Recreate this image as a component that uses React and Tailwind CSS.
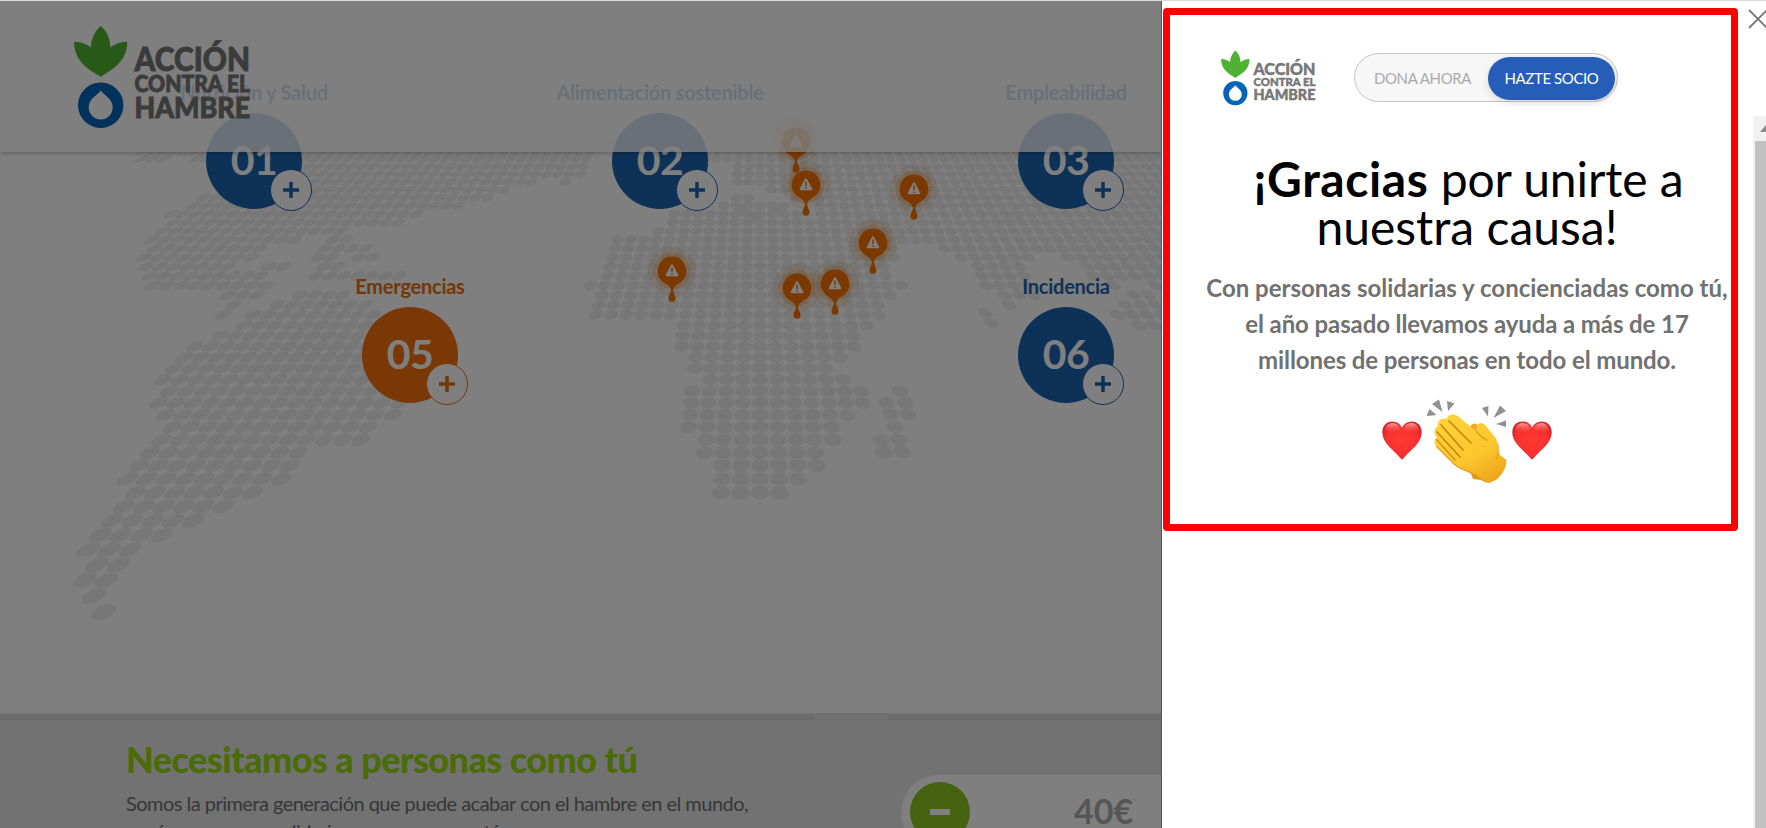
import React from "react";

const NORTH_AMERICA = [[141,150],[250,120],[330,112],[600,105],[600,150],[592,165],[565,187],[548,178],[533,182],[477,202],[418,215],[400,228],[325,232],[275,246],[240,264],[232,272],[285,262],[280,272],[252,279],[277,288],[252,298],[236,318],[217,318],[228,292],[170,294],[145,284],[150,272],[134,266],[145,240],[165,218],[187,202],[215,194],[215,168],[190,158],[141,160]];
const CARIBBEAN = [[325,238],[356,240],[374,250],[372,262],[352,262],[340,254],[345,268],[400,272],[404,280],[340,281],[300,281],[315,266],[308,258],[325,250]];
const SOUTH_AMERICA = [[310,290],[345,290],[376,303],[370,330],[400,380],[405,410],[378,423],[369,436],[361,447],[297,455],[290,470],[277,485],[246,495],[236,510],[203,524],[170,540],[136,553],[124,568],[112,585],[101,598],[112,614],[84,618],[78,604],[80,590],[84,583],[80,568],[88,553],[79,537],[92,522],[105,508],[117,497],[114,483],[126,470],[139,457],[152,445],[165,433],[176,423],[152,411],[148,400],[160,390],[156,378],[170,366],[183,354],[197,344],[224,334],[238,324],[250,313],[280,304]];
const AFRICA_EURASIA = [[700,152],[760,132],[770,112],[860,104],[1000,100],[1200,105],[1200,300],[1160,290],[1125,280],[1090,277],[1075,262],[1055,252],[1035,254],[1030,270],[1038,302],[1010,306],[985,290],[965,262],[945,252],[925,240],[900,240],[893,262],[902,285],[890,300],[882,316],[870,332],[852,350],[840,362],[842,373],[858,381],[876,393],[864,405],[850,418],[836,430],[838,443],[822,456],[824,468],[806,482],[790,498],[710,498],[710,465],[694,455],[696,440],[680,430],[685,395],[702,383],[690,372],[690,358],[678,348],[668,338],[684,330],[674,318],[648,314],[642,323],[594,323],[586,308],[588,290],[597,271],[605,250],[612,236],[655,236],[662,222],[680,210],[722,207],[736,196],[752,190],[752,204],[770,205],[790,205],[800,212],[808,217],[760,218],[722,222],[760,222],[810,222],[812,202],[750,186],[725,178],[740,163],[700,168]];
const OCEANIA = [[1105,278],[1165,300],[1165,335],[1140,330],[1130,318],[1110,320],[1125,300]];
const LONE_DOTS = [[900,391],[887,403],[905,403],[891,414],[908,414],[895,427],[881,440],[899,440],[884,452],[902,452],[985,313],[992,323],[741,211],[757,217],[775,210]];
const REGIONS = [NORTH_AMERICA, CARIBBEAN, SOUTH_AMERICA, AFRICA_EURASIA, OCEANIA];

function inside(poly, x, y) {
  let hit = false;
  for (let i = 0, j = poly.length - 1; i < poly.length; j = i++) {
    const [xi, yi] = poly[i];
    const [xj, yj] = poly[j];
    if (yi > y !== yj > y && x < ((xj - xi) * (y - yi)) / (yj - yi) + xi) hit = !hit;
  }
  return hit;
}

// Row pitch and column pitch both shrink towards the horizon.
const rowPitch = (y) => 13.5 * Math.pow((y + 756) / 1241, 2);
const colPitch = (y) => 0.026 * (y + 258);

function dot(x, y) {
  const slope = (x - 760) / (y + 258);
  const a = 0.48 * colPitch(y);
  const d = 0.5 * rowPitch(y);
  return (
    <circle key={`${x.toFixed(1)}-${y.toFixed(1)}`} r="1" transform={`matrix(${a.toFixed(2)} 0 ${(slope * d).toFixed(2)} ${d.toFixed(2)} ${x.toFixed(1)} ${y.toFixed(1)})`} />
  );
}

function buildMap() {
  const dots = [];
  const ys = [];
  for (let y = 492.7; y > 100; y -= rowPitch(y)) ys.push(y);
  for (let y = 492.7 + rowPitch(498); y < 615; y += rowPitch(y + 6)) ys.push(y);
  for (const y of ys) {
    for (let i = -70; i < 50; i++) {
      const x = 760 + i * colPitch(y);
      if (x < 60 || x > 1170) continue;
      if (REGIONS.some((p) => inside(p, x, y))) dots.push(dot(x, y));
    }
  }
  for (const [x, y] of LONE_DOTS) dots.push(dot(x, y));
  return dots;
}
const MAP_DOTS = buildMap();

function Logo({ className, textFill }) {
  return (
    <svg viewBox="74 25 177 104" className={className} role="img" aria-label="Acción contra el Hambre">
      <path fill="#50b232" d="M100.700 25.700C106 30.500 110.400 38 110.400 47.500C114 44.300 120 42 127.300 41.700C127 58 117.500 66 108 72C105 74 102.500 75.500 100.700 77C99 75.500 96 74 93 72C84 66 74.300 58 74 41.700C81.500 42 87.500 44.300 91 47.500C91 38 95.500 30.500 100.700 25.700Z" />
      <path fill="#0364b8" fillRule="evenodd" d="M100.700 82.500a22.700 22.700 0 1 0 .01 0ZM100.700 90.500C103.500 95 112.700 98.500 112.700 107.300A12 12.200 0 0 1 88.700 107.300C88.700 98.500 98 95 100.700 90.500Z" />
      <g fill={textFill} stroke={textFill} strokeWidth="0.900" className="font-['Lato'] font-black">
        <text x="134.500" y="71.300" fontSize="32" textLength="115.500" lengthAdjust="spacingAndGlyphs">ACCIÓN</text>
        <text x="134.500" y="92.200" fontSize="22.500" textLength="115.500" lengthAdjust="spacingAndGlyphs">CONTRA EL</text>
        <text x="134.500" y="118" fontSize="28.500" textLength="115.500" lengthAdjust="spacingAndGlyphs">HAMBRE</text>
      </g>
    </svg>
  );
}

function Pin({ className }) {
  return (
    <svg viewBox="-26 -26 52 60" className={`absolute h-[60px] w-[52px] -translate-x-[26px] -translate-y-[26px] ${className}`}>
      <circle r="24" fill="#f07000" opacity="0.100" />
      <circle r="18.500" fill="#f07000" opacity="0.200" />
      <path fill="#f67300" d="M0 -14.500A14.300 14.500 0 0 1 10 10.300C6 13.500 2.200 14.500 1 19C1.300 22 3.500 24.500 3.500 27.300A3.500 3.500 0 0 1 -3.500 27.300C-3.500 24.500 -1.300 22 -1 19C-2.200 14.500 -6 13.500 -10 10.300A14.300 14.500 0 0 1 0 -14.500Z" />
      <path fill="#fff" stroke="#fff" strokeWidth="2" strokeLinejoin="round" d="M0 -5.800L5.300 4.300H-5.300Z" />
      <path stroke="#f67300" strokeWidth="1.500" d="M0 -3.500V1.200M0 2.500V4" />
    </svg>
  );
}

function Program({ className, label, number, tone }) {
  const orange = tone === "orange";
  return (
    <div className={`absolute flex w-[240px] -translate-x-1/2 flex-col items-center ${className}`}>
      <div className={`text-[20px] leading-[24px] font-bold tracking-[-0.25px] whitespace-nowrap ${orange ? "text-[#e66e0c]" : "text-[#1d62ad]"}`}>{label}</div>
      <div className={`relative mt-[9px] flex h-24 w-24 items-center justify-center rounded-full pb-[2px] text-[41px] font-bold tracking-[-0.5px] text-white ${orange ? "bg-[#f2700a]" : "bg-[#1c62ae]"}`}>
        {number}
        <span className={`absolute top-[56px] left-[64px] flex h-[42px] w-[42px] items-center justify-center rounded-full border bg-white ${orange ? "border-[#f2700a] text-[#e66e0c]" : "border-[#1c62ae] text-[#1c62ae]"}`}>
          <svg viewBox="0 0 16 16" className="h-4 w-4"><path d="M8 0V16M0 8H16" stroke="currentColor" strokeWidth="3.500" /></svg>
        </span>
      </div>
    </div>
  );
}

function Heart() {
  return (
    <svg viewBox="0 0 40 39" className="mt-[22px] h-[39px] w-10">
      <defs>
        <radialGradient id="heart" cx="50%" cy="48%" r="62%">
          <stop offset="0" stopColor="#ff3a34" />
          <stop offset="0.650" stopColor="#f5302f" />
          <stop offset="1" stopColor="#c91a25" />
        </radialGradient>
        <linearGradient id="shine" x1="0" y1="0" x2="0" y2="1">
          <stop offset="0" stopColor="#ffd0c8" stopOpacity="0.700" />
          <stop offset="1" stopColor="#ff5a50" stopOpacity="0" />
        </linearGradient>
      </defs>
      <path fill="url(#heart)" d="M20 6.500C22 2.500 25.500 .5 29.500 .5C35.500 .5 39.700 5 39.700 11.500C39.700 22 28.500 29 20 38.700C11.500 29 .3 22 .3 11.500C.3 5 4.500 .5 10.500 .5C14.500 .5 18 2.500 20 6.500Z" />
      <path fill="url(#shine)" d="M3 9C4 4 7 2 10.500 2C14.500 2 17 4 18 8C15 12 5 14 3 9ZM37 9C36 4 33 2 29.500 2C25.500 2 23 4 22 8C25 12 35 14 37 9Z" />
    </svg>
  );
}

function Clap() {
  return (
    <svg viewBox="0 0 80 84" className="h-[84px] w-20">
      <defs>
        <linearGradient id="skin" x1="0.200" y1="0" x2="0.800" y2="1">
          <stop offset="0" stopColor="#ffd23a" />
          <stop offset="0.600" stopColor="#fdc62d" />
          <stop offset="1" stopColor="#eda41a" />
        </linearGradient>
      </defs>
      <g fill="#8e9093">
        <path d="M-0.500 17L2.500 10L9.500 16ZM5 5L12 0.500L15.500 13ZM20 2L27.500 4.500L21 12Z" />
        <path d="M55 9L61.500 7L61 17.500ZM73 6.500L79 12L66.500 19ZM69 25L79 21.500V28Z" />
      </g>
      <path fill="#dd9714" d="M42 70L46 80L54 81L52 76Z" />
      <path fill="#efab20" d="M43 28C46 23 50 24 52 28L50 38L43 34Z" />
      <path fill="url(#skin)" d="M11 27C10 21 15 18 20 20C20 15 28 14 32 18L50 33C48 25 54 21 59 27C62 32 68 36 70 42C72 48 71 53 73 56L79.500 61C79.500 71 72 81 64 83C57 84 54 80 49 76C43 73 34 71 27 65L9 47C6 42 8 39 10 39C6 34 7 29 11 27Z" />
      <path fill="none" stroke="#e2a21b" strokeWidth="1.200" d="M9 47L27 65C34 71 43 73 49 76C54 80 57 84 64 83" />
      <g fill="none" stroke="#c98511" strokeLinecap="round" strokeWidth="1.700">
        <path d="M22 22L44 44" />
        <path d="M14 26L36 51" />
        <path d="M10 33L33 58" />
        <path d="M10 41L28 61" opacity="0.800" />
        <path d="M50 33Q55 39 60 41" opacity="0.600" />
        <path d="M71 45Q73 53 69 60" opacity="0.350" />
      </g>
    </svg>
  );
}

export default function App() {
  return (
    <div className="relative flex h-[828px] w-[1766px] overflow-hidden bg-white font-['Lato',sans-serif]">
      <main className="relative flex w-[1162px] shrink-0 flex-col overflow-hidden bg-white">
        <section className="relative h-[713px] shrink-0">
          <svg viewBox="0 0 1162 713" className="absolute inset-0 h-[713px] w-[1162px]" fill="#eeeeee">{MAP_DOTS}</svg>
          <Pin className="top-[142px] left-[796px]" />
          <Pin className="top-[185px] left-[806px]" />
          <Pin className="top-[189px] left-[914px]" />
          <Pin className="top-[243px] left-[873px]" />
          <Pin className="top-[271px] left-[672px]" />
          <Pin className="top-[288px] left-[797px]" />
          <Pin className="top-[284px] left-[835px]" />
          <Program className="top-[80px] left-[254px]" label="Nutrición y Salud" number="01" />
          <Program className="top-[80px] left-[660px]" label="Alimentación sostenible" number="02" />
          <Program className="top-[80px] left-[1066px]" label="Empleabilidad" number="03" />
          <Program className="top-[274px] left-[410px]" label="Emergencias" number="05" tone="orange" />
          <Program className="top-[274px] left-[1066px]" label="Incidencia" number="06" />
        </section>
        <section className="relative flex grow bg-[#e4e4e4]">
          <div className="absolute inset-x-0 top-0 flex h-[7px] bg-[#e0e0e0]">
            <span className="w-[813px] bg-linear-to-b from-[#e8e8e8] to-[#d5d5d5] to-40%" />
            <span className="w-[75px] bg-linear-to-b from-[#e4e4e4] to-[#dedede]" />
            <span className="grow bg-linear-to-b from-[#e8e8e8] to-[#d5d5d5] to-40%" />
          </div>
          <div className="w-[775px] shrink-0 pt-[24px] pl-[126px]">
            <h2 className="text-[36px] leading-[44px] font-black tracking-[-0.55px] whitespace-nowrap text-[#94d60a]">Necesitamos a personas como tú</h2>
            <p className="mt-[8px] text-[20px] leading-[28px] tracking-[-0.53px] whitespace-nowrap text-[#6e6e6e]">
              Somos la primera generación que puede acabar con el hambre en el mundo,
              <br />y más que nunca, solidarias personas como tú
            </p>
          </div>
          <div className="mt-[62px] ml-[126px] flex h-[75px] grow rounded-l-full bg-white pt-[7px] pl-[9px]">
            <span className="flex h-[60px] w-[60px] items-center justify-center rounded-full bg-[#8bc420]">
              <span className="h-[6px] w-5 bg-white" />
            </span>
            <span className="ml-[104px] pt-[8px] text-[34px] leading-[42px] font-bold text-[#aaa]">40€</span>
          </div>
        </section>
        <header className="absolute inset-x-0 top-0 h-[152px] bg-white/80 pt-[25px] pl-[74px] shadow-[0_2px_4px_rgba(0,0,0,0.2)]">
          <Logo className="h-[104px] w-[177px]" textFill="#777" />
        </header>
        <div className="absolute inset-0 border-r border-[#555] bg-black/50" />
      </main>

      <aside className="relative w-[604px] bg-white pt-[50px]">
        <div className="flex items-start pl-[59px]">
          <Logo className="h-[56px] w-[95px]" textFill="#777" />
          <div className="mt-[3px] ml-[38px] flex h-[49px] w-[264px] items-center rounded-full border border-[#c4c4c4] bg-[#f7f7f7] text-[15px] tracking-[-0.4px]">
            <span className="w-[133px] pt-[2px] pl-[19px] whitespace-nowrap text-[#aaa]">DONA AHORA</span>
            <span className="mt-px flex h-[43px] w-[127px] items-center justify-center rounded-full bg-[#255db8] whitespace-nowrap text-white shadow-[0_3px_8px_rgba(0,0,0,0.12)]">HAZTE SOCIO</span>
          </div>
        </div>
        <div className="mt-[49px] w-[610px] text-center">
          <h1 className="text-[48px] leading-[48px] whitespace-nowrap text-black"><b className="ml-[3px] tracking-[0.6px]">¡Gracias</b><span className="tracking-[-0.1px]"> por unirte a</span><br />nuestra causa!</h1>
          <p className="mt-[19px] text-[24px] leading-[36px] font-bold whitespace-nowrap text-[#717171]">
            Con personas solidarias y concienciadas como tú,<br />
            <span className="tracking-[-0.1px]">el año pasado llevamos ayuda a más de 17<br />millones de personas en todo el mundo.</span>
          </p>
          <div className="mt-[21px] flex justify-center gap-[5px]"><Heart /><Clap /><Heart /></div>
        </div>
        <div className="absolute top-[8px] left-[1px] h-[523px] w-[575px] rounded-[4px] border-[7px] border-[#ff0000]" />
        <svg viewBox="0 0 20 20" className="absolute top-[9px] left-[586px] h-5 w-5"><path d="M1 1L19 19M19 1L1 19" stroke="#777" strokeWidth="1.800" /></svg>
        <div className="absolute top-[116px] right-0 flex h-[712px] w-[13px] flex-col bg-[#f1f1f1]">
          <svg viewBox="0 0 13 25" className="h-[25px] w-[13px]"><path d="M7 16L13 9V16Z" fill="#8a8a8a" /></svg>
          <span className="ml-[2px] grow bg-[#c1c1c1]" />
        </div>
      </aside>
      <div className="absolute inset-x-0 top-0 h-px bg-[#d9dcdc]" />
    </div>
  );
}
